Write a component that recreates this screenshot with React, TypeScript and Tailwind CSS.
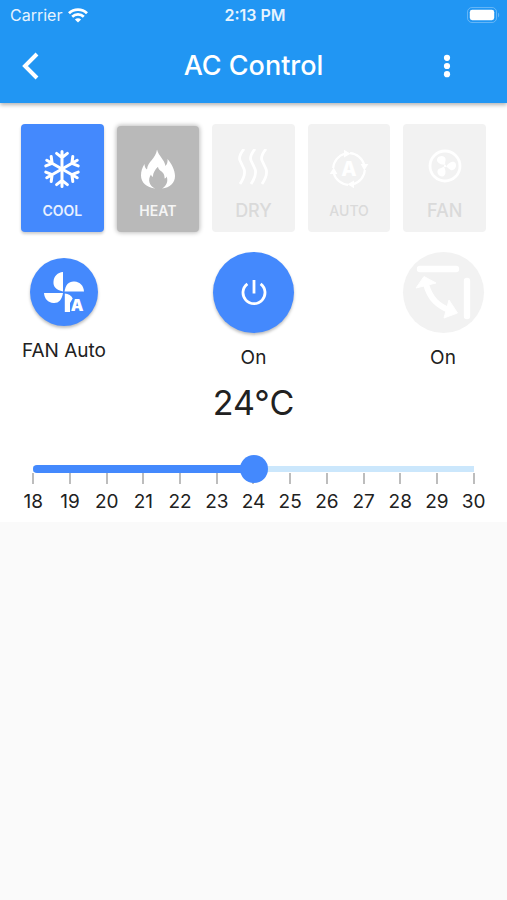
import { useState } from "react";
import type { ReactNode } from "react";

const MIN = 18;
const MAX = 30;
const degrees = Array.from({ length: MAX - MIN + 1 }, (_, i) => MIN + i);

function WifiIcon() {
  return (
    <svg viewBox="0 0 20 15" className="h-[15px] w-5" fill="none" stroke="currentColor" aria-hidden="true">
      <path d="M1 5.2C6 .3 14 .3 19 5.2" strokeWidth="2.8" />
      <path d="M4.2 8.7C7.4 5.6 12.6 5.6 15.8 8.7" strokeWidth="2.7" />
      <path d="M10 14.6 6.9 11.4C8.6 9.8 11.4 9.8 13.1 11.4Z" fill="currentColor" stroke="none" />
    </svg>
  );
}

function BatteryIcon() {
  return (
    <svg viewBox="0 0 33 16" className="h-4 w-[33px]" aria-hidden="true">
      <rect x=".5" y=".5" width="29" height="15" rx="4.5" fill="none" stroke="#fff" strokeOpacity=".3" />
      <rect x="2.8" y="2.8" width="24.4" height="10.4" rx="2.4" fill="#fff" />
      <path d="M31 5.5c1.6.8 1.6 4.2 0 5Z" fill="#fff" fillOpacity=".3" />
    </svg>
  );
}

function CoolIcon() {
  return (
    <svg viewBox="-20 -20 40 40" className="size-10" fill="none" stroke="currentColor" strokeWidth="3" strokeLinecap="round" aria-hidden="true">
      {[0, 60, 120, 180, 240, 300].map((angle) => (
        <path key={angle} transform={`rotate(${angle})`} d="M0 0V-17.6M-5.4-15.6 0-11.4 5.4-15.6" />
      ))}
    </svg>
  );
}

function HeatIcon() {
  return (
    <svg viewBox="0 0 40 40" className="size-10" fill="currentColor" aria-hidden="true">
      <path d="M19 .5C20.5 7 26.5 10.5 27.5 17 29.2 15 29.8 13 29.5 10 33.5 14.5 37 21 37 27 37 34 32 38.5 24 39.6 28.5 37 30.5 32.5 28.6 27.6 28.2 28.8 27.6 29.4 26.6 29.6 26.8 25.5 25 23.5 22.8 22 21 20.8 20.2 19.6 20 17.8 17.2 20.5 15.2 23.5 14.8 28 13.8 27.2 13.2 26.4 13 25.4 9.5 30.5 11 36.5 17.4 39.6 8.5 38.5 3 33.5 3 26.5 3 22.5 4.2 18.5 6.5 15 6.6 17.5 7.3 19.3 9 20.5 9.5 12.5 18 9.5 19 .5Z" />
    </svg>
  );
}

function DryIcon() {
  return (
    <svg viewBox="0 0 40 40" className="size-10" fill="none" stroke="currentColor" strokeWidth="2.8" strokeLinejoin="round" aria-hidden="true">
      {[0, 11, 22].map((x) => (
        <path key={x} transform={`translate(${x} 0)`} d="M11 0C7 5 5.5 8 7 11.5L11 20C12.5 24 11 29 7 35" />
      ))}
    </svg>
  );
}

function AutoIcon() {
  return (
    <svg viewBox="-20 -20 40 40" className="size-10 overflow-visible" aria-hidden="true">
      {[0, 90, 180, 270].map((angle) => (
        <g key={angle} transform={`rotate(${angle})`}>
          <path d="M-15.8-1A15.8 15.8 0 0 1-4-15.3" fill="none" stroke="currentColor" strokeWidth="2.2" />
          <path d="M-5-19.3 1.5-15.3-5-11.6Z" fill="currentColor" />
        </g>
      ))}
      <text y="7" textAnchor="middle" fontSize="20" fontWeight="800" fill="currentColor">A</text>
    </svg>
  );
}

function FanIcon() {
  return (
    <svg viewBox="-20 -17 40 40" className="size-10" fill="currentColor" aria-hidden="true">
      <circle r="15" fill="none" stroke="currentColor" strokeWidth="2.8" />
      {[-10, 110, 230].map((angle) => (
        <path key={angle} transform={`rotate(${angle})`} d="M-.8-1.4C-5-2.5-8.4-6-6.3-8.8-3.6-12 1.8-10.4 1.8-6.8 1.6-4.8.4-3.8.6-1.4Z" />
      ))}
      <circle r="1.2" />
    </svg>
  );
}

function FanAutoIcon() {
  return (
    <svg viewBox="0 0 42 42" className="size-[42px] overflow-visible" fill="currentColor" aria-hidden="true">
      <path d="M20 20.5C13 19 10 15.5 10.5 10.5 11 5 14.5 1.5 20 1Z" />
      <path d="M21.5 20.5C22.5 13.5 26 10 31.5 10.5 37 11 40.5 14.5 41 20.5Z" />
      <path d="M20 22C19 29 15.5 32.4 10.5 32 5 31.6 1.5 28 1 22Z" />
      <path d="M21.8 22.5C25.5 23 28.5 24.5 29.7 27.5L27 32V41H21.8Z" />
      <text x="34" y="40" textAnchor="middle" fontSize="16" fontWeight="900">A</text>
    </svg>
  );
}

function PowerIcon() {
  return (
    <svg viewBox="0 0 26 26" className="size-[26px]" fill="none" stroke="currentColor" strokeWidth="2.8" aria-hidden="true">
      <path d="M13 0V13.5M6.4 3.9A11 11 0 1 0 19.6 3.9" />
    </svg>
  );
}

function SwingIcon() {
  return (
    <svg viewBox="0 0 81 81" className="size-full" fill="none" stroke="currentColor" aria-hidden="true">
      <path d="M17 17H53M64 29V64" strokeWidth="6.4" strokeLinecap="round" />
      <path d="M23 32C27 47 35 54 48 59" strokeWidth="6" />
      <path d="M13 36 21 24.5 33 31ZM46 48 54.5 61 41 66Z" fill="currentColor" strokeWidth="1" strokeLinejoin="round" />
    </svg>
  );
}

type Mode = { name: string; icon: ReactNode; card: string; label: string; disabled?: boolean };

const modes: Mode[] = [
  { name: "COOL", icon: <CoolIcon />, card: "h-[108px] pt-[25px] bg-[#4489fd] text-white shadow-[0_2px_3px_rgba(0,0,0,0.2)]", label: "text-sm font-semibold text-[#e8f0ff]" },
  { name: "HEAT", icon: <HeatIcon />, card: "mt-0.5 h-[106px] pt-[23px] bg-[#b9b9b9] text-white shadow-[0_0_4px_1px_rgba(0,0,0,0.25)]", label: "text-sm font-semibold text-[#f5f5f5]" },
  { name: "DRY", icon: <DryIcon />, card: "h-[108px] pt-[25px] bg-[#f2f2f2] text-white", label: "text-lg font-medium text-[#dadada]", disabled: true },
  { name: "AUTO", icon: <AutoIcon />, card: "h-[108px] pt-[25px] bg-[#f2f2f2] text-white", label: "text-sm font-medium text-[#dadada]", disabled: true },
  { name: "FAN", icon: <FanIcon />, card: "h-[108px] pt-[25px] bg-[#f2f2f2] text-white", label: "text-lg font-medium text-[#dadada]", disabled: true },
];

function ModeButton({ mode }: { mode: Mode }) {
  return (
    <button type="button" disabled={mode.disabled} className={`flex flex-col items-center rounded ${mode.card}`}>
      {mode.icon}
      <span className={`mt-3 leading-5 ${mode.label}`}>{mode.name}</span>
    </button>
  );
}

export default function App() {
  const [temperature, setTemperature] = useState(24);
  const filled = ((temperature - MIN) / (MAX - MIN)) * 100;

  return (
    <div className="min-h-screen bg-[#fafafa] font-['Inter',sans-serif] text-[#212121]">
      <header className="relative bg-[#2196f3] pb-0.5 text-white shadow-[0_2px_4px_rgba(0,0,0,0.3)]">
        <div className="grid h-[30px] grid-cols-3 items-center pl-2.5 pr-[7px] text-base">
          <div className="flex items-center gap-1.5 text-[#e6f3fe]">
            <span>Carrier</span>
            <span className="text-white"><WifiIcon /></span>
          </div>
          <time className="text-center font-semibold text-[#e6f3fe]">2:13 PM</time>
          <div className="justify-self-end"><BatteryIcon /></div>
        </div>
        <div className="grid h-[71px] grid-cols-[1fr_auto_1fr] items-center">
          <button type="button" aria-label="Back" className="ml-[19px] w-6">
            <svg viewBox="0 0 24 28" className="h-7 w-6" fill="none" stroke="currentColor" strokeWidth="4" aria-hidden="true">
              <path d="M18 2 6 14 18 26" />
            </svg>
          </button>
          <h1 className="text-[27px] font-medium leading-8">AC Control</h1>
          <button type="button" aria-label="More options" className="mr-12 w-6 justify-self-end">
            <svg viewBox="0 0 24 28" className="h-7 w-6" fill="currentColor" aria-hidden="true">
              <circle cx="12" cy="5.8" r="3.1" />
              <circle cx="12" cy="14" r="3.1" />
              <circle cx="12" cy="22.2" r="3.1" />
            </svg>
          </button>
        </div>
      </header>

      <main className="bg-white pb-2 pt-[21px]">
        <section aria-label="Mode" className="grid grid-cols-5 items-start gap-[13px] px-[21px]">
          {modes.map((mode) => (
            <ModeButton key={mode.name} mode={mode} />
          ))}
        </section>

        <section aria-label="Controls" className="mt-5 flex items-start justify-between px-[21px] text-[19px] leading-6">
          <div className="mt-1.5 flex w-[86px] flex-col items-center gap-[13px]">
            <button type="button" aria-labelledby="fan-label" className="flex size-[68px] items-center justify-center rounded-full bg-[#4489fd] text-white shadow-[0_2px_3px_rgba(0,0,0,0.25)]">
              <FanAutoIcon />
            </button>
            <span id="fan-label" className="whitespace-nowrap">FAN Auto</span>
          </div>
          <div className="flex w-[86px] flex-col items-center gap-[13px]">
            <button type="button" aria-label="Power" className="flex size-[81px] items-center justify-center rounded-full bg-[#4489fd] text-white shadow-[0_2px_3px_rgba(0,0,0,0.25)]">
              <PowerIcon />
            </button>
            <span>On</span>
          </div>
          <div className="flex w-[86px] flex-col items-center gap-[13px]">
            <button type="button" aria-label="Swing" disabled className="size-[81px] rounded-full bg-[#f2f2f2] text-white">
              <SwingIcon />
            </button>
            <span>On</span>
          </div>
        </section>

        <section aria-label="Temperature">
          <output htmlFor="temperature" className="mt-[13px] block text-center text-[34px] leading-10">
            {temperature}°C
          </output>
          <div className="relative mx-[19px] mt-8 h-7 px-3.5">
            <div className="flex h-full items-center">
              <div className="flex h-1.5 w-full items-center bg-[#cbe7fc]">
                <div className="h-2 shrink-0 rounded-l-full bg-[#4489fd]" style={{ width: `${filled}%` }} />
              </div>
            </div>
            <input
              id="temperature"
              type="range"
              aria-label="Target temperature"
              min={MIN}
              max={MAX}
              value={temperature}
              onChange={(e) => setTemperature(Number(e.target.value))}
              className="absolute inset-0 z-10 h-7 w-full cursor-pointer appearance-none bg-transparent [&::-webkit-slider-thumb]:size-7 [&::-webkit-slider-thumb]:appearance-none [&::-webkit-slider-thumb]:rounded-full [&::-webkit-slider-thumb]:bg-[#4489fd]"
            />
          </div>
          <div className="-mt-2.5 grid grid-cols-13 px-[15px]">
            {degrees.map((degree) => (
              <div key={degree} className="flex flex-col items-center gap-1.5">
                <span className="h-[11px] w-0.5 bg-[#bdbdbd]" />
                <span className="text-[19px] leading-6">{degree}</span>
              </div>
            ))}
          </div>
        </section>
      </main>
    </div>
  );
}
